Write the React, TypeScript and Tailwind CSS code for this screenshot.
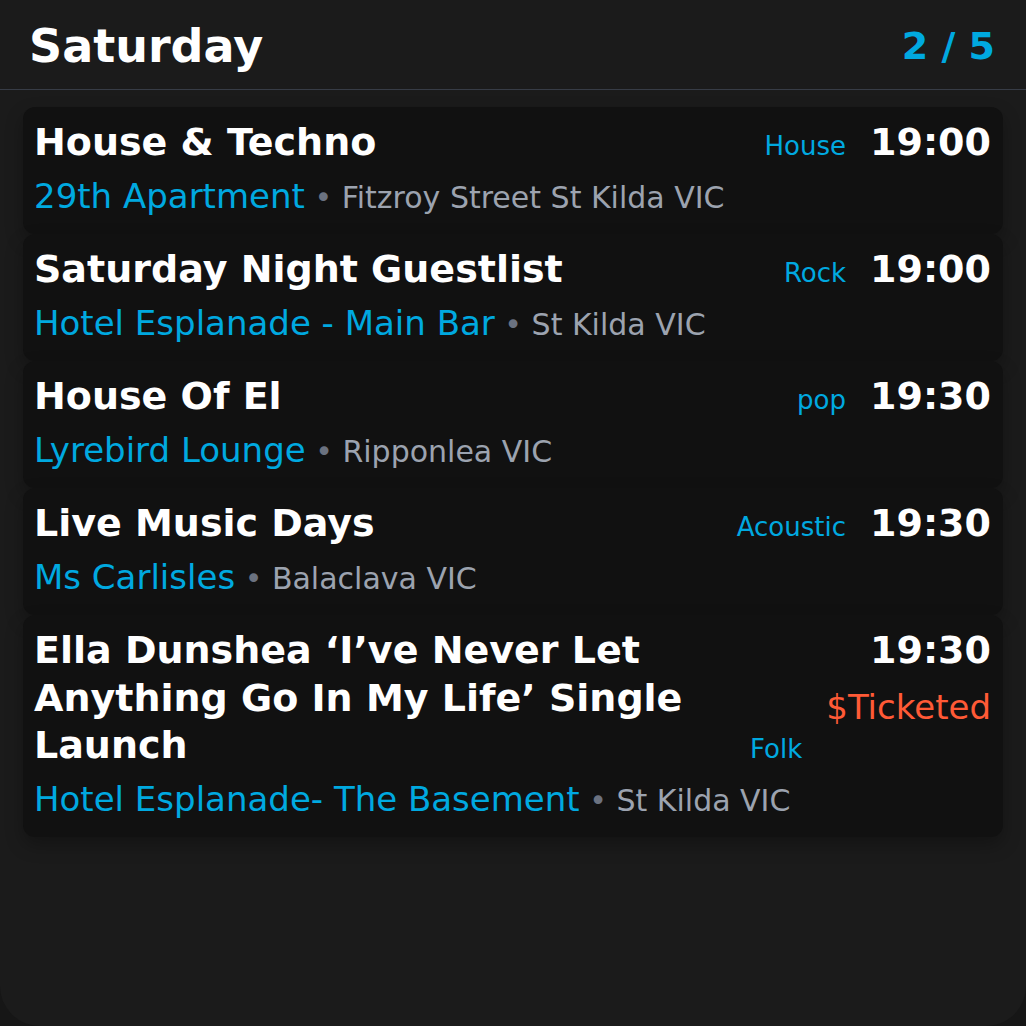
import React from 'react';

type Gig = {
  title: string;
  genre: string;
  time: string;
  venue: string;
  place: string;
  ticketed?: boolean;
};

const gigs: Gig[] = [
  { title: 'House & Techno', genre: 'House', time: '19:00', venue: '29th Apartment', place: 'Fitzroy Street St Kilda VIC' },
  { title: 'Saturday Night Guestlist', genre: 'Rock', time: '19:00', venue: 'Hotel Esplanade - Main Bar', place: 'St Kilda VIC' },
  { title: 'House Of El', genre: 'pop', time: '19:30', venue: 'Lyrebird Lounge', place: 'Ripponlea VIC' },
  { title: 'Live Music Days', genre: 'Acoustic', time: '19:30', venue: 'Ms Carlisles', place: 'Balaclava VIC' },
  {
    title: 'Ella Dunshea \u2018I\u2019ve Never Let Anything Go In My Life\u2019 Single Launch',
    genre: 'Folk',
    time: '19:30',
    venue: 'Hotel Esplanade- The Basement',
    place: 'St Kilda VIC',
    ticketed: true,
  },
];

const GigCard = ({ gig }: { gig: Gig }) => (
  <div className="relative rounded-xl bg-[#111111] pl-[11px] pr-3 pt-[12px] pb-[12.5px] shadow-[0_8px_18px_rgba(0,0,0,0.28)]">
    <div className="flex [align-items:last_baseline]">
      <div className="min-w-0 flex-1 text-[38px] font-bold leading-[47.5px] text-white">{gig.title}</div>
      <span className="mr-6 text-[26px] leading-[34px] text-[#00a9e0]">{gig.genre}</span>
      <div className="flex flex-col items-end self-start">
        <span className="text-[38px] font-bold leading-[47.5px] text-white">{gig.time}</span>
        {gig.ticketed && (
          <span className="mt-[7px] text-[34px] leading-[51px] text-[#ff5a36]">$Ticketed</span>
        )}
      </div>
    </div>
    <div className="mt-1 text-[34px] leading-[51px] text-[#00a9e0]">
      {gig.venue}
      <span className="text-[30px] leading-none text-[#9ca3af]">
        {' '}
        <span className="text-[#6b7280]">•</span> {gig.place}
      </span>
    </div>
  </div>
);

export default function App() {
  return (
    <div className="h-[1026px] w-[1026px] bg-[#161616]" style={{ fontFamily: '"DejaVu Sans", Verdana, sans-serif' }}>
      <div className="flex h-full flex-col rounded-b-[40px] bg-[#1b1b1b]">
        <header className="flex h-[90px] items-center justify-between border-b border-[#373c46] pl-[29px] pr-[31px] pt-[2px]">
          <h1 className="text-[46px] font-bold leading-none text-white">Saturday</h1>
          <span className="text-[38px] font-bold leading-none text-[#00a9e0]">2 / 5</span>
        </header>
        <div className="flex flex-col px-[23px] pt-[17px]">
          {gigs.map((g) => (
            <GigCard key={g.title} gig={g} />
          ))}
        </div>
      </div>
    </div>
  );
}
